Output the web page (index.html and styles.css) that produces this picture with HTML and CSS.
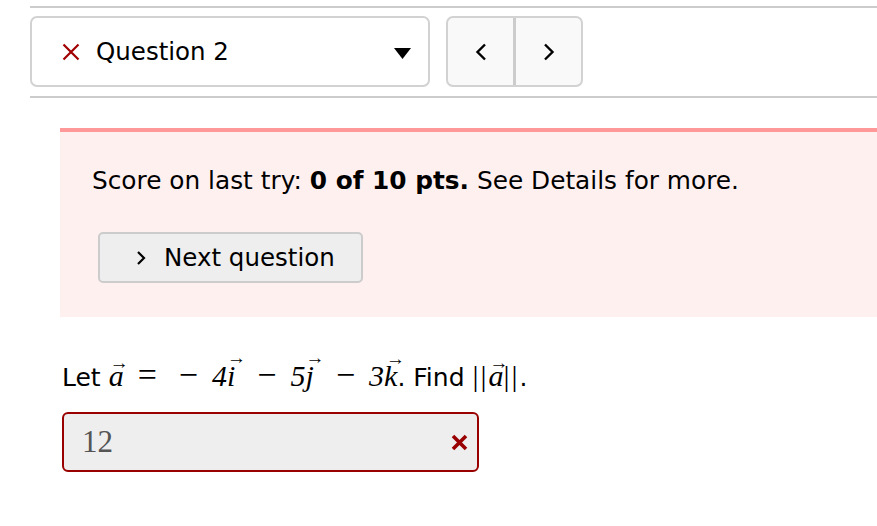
FILE: index.html
```html
<!DOCTYPE html>
<html>
<head>
<meta charset="utf-8">
<link rel="stylesheet" href="styles.css">
</head>
<body>
<div class="page">
  <div class="nav">
    <div class="select">
      <svg class="x" width="18" height="18" viewBox="0 0 18 18"><path d="M1.5 1.5 L16.5 16.5 M16.5 1.5 L1.5 16.5" stroke="#a00000" stroke-width="2.2"/></svg>
      <span class="qlabel">Question 2</span>
      <svg class="caret" width="17" height="11" viewBox="0 0 17 11"><path d="M0 0 H17 L8.5 11 Z" fill="#000"/></svg>
    </div>
    <div class="pager">
      <div class="pbtn"><svg width="12" height="20" viewBox="0 0 12 20"><path d="M10 2.5 L2.5 10 L10 17.5" fill="none" stroke="#000" stroke-width="2.4"/></svg></div>
      <div class="pdiv"></div>
      <div class="pbtn"><svg width="12" height="20" viewBox="0 0 12 20"><path d="M2 2.5 L9.5 10 L2 17.5" fill="none" stroke="#000" stroke-width="2.4"/></svg></div>
    </div>
  </div>

  <div class="score">
    <p class="scoretext">Score on last try: <b>0 of 10 pts.</b> See Details for more.</p>
    <div class="nextbtn"><svg width="10" height="16" viewBox="0 0 10 16"><path d="M2 2 L8 8 L2 14" fill="none" stroke="#000" stroke-width="2.2"/></svg><span>Next question</span></div>
  </div>

  <div class="question">
    <p class="qtext">Let <span class="m"><span class="vec">a</span><span class="rel">=</span><span class="bin first">&minus;</span><span class="n">4</span><span class="vec vi">i</span><span class="bin">&minus;</span><span class="n">5</span><span class="vec vj">j</span><span class="bin">&minus;</span><span class="n">3</span><span class="vec vk">k</span></span>. Find <span class="m"><span class="bar">||</span><span class="vec">a</span><span class="bar">||</span></span>.</p>
    <div class="answer">
      <span class="val">12</span>
      <svg class="wrong" width="17" height="17" viewBox="0 0 17 17"><path d="M2 2 L15 15 M15 2 L2 15" stroke="#990000" stroke-width="3.6"/></svg>
    </div>
  </div>
</div>
</body>
</html>
```

FILE: styles.css
```css
html, body {
  margin: 0;
  padding: 0;
  background: #fff;
}
body {
  font-family: "DejaVu Sans", "Open Sans", sans-serif;
  color: #000;
}
.page {
  width: 877px;
  height: 526px;
  overflow: hidden;
}
.nav {
  margin: 6px 0 0 30px;
  border-top: 2px solid #cccccc;
  border-bottom: 2px solid #cccccc;
  padding: 8px 0 9px 0;
  display: flex;
  gap: 16px;
}
.select {
  width: 366px;
  height: 67px;
  border: 2px solid #d2d2d2;
  border-radius: 7px;
  display: flex;
  align-items: center;
  padding-left: 30px;
}
.x {
  margin-right: 16px;
}
.qlabel {
  font-size: 24.5px;
  flex: 1;
}
.caret {
  margin-right: 17px;
  margin-top: 4px;
}
.pager {
  display: flex;
  border: 2px solid #d2d2d2;
  border-radius: 7px;
  background: #f9f9f9;
  height: 67px;
}
.pbtn {
  width: 65px;
  display: flex;
  align-items: center;
  justify-content: center;
}
.pdiv {
  width: 3px;
  background: #cccccc;
}
.score {
  margin: 30px 0 0 60px;
  border-top: 4px solid #ff9999;
  background: #fff0f0;
  padding: 34px 0 34px 32px;
}
.scoretext {
  margin: 0;
  font-size: 24.8px;
  line-height: 30px;
}
.scoretext b {
  font-weight: 700;
}
.nextbtn {
  margin: 36px 0 0 6px;
  width: 265px;
  height: 51px;
  box-sizing: border-box;
  border: 2px solid #cccccc;
  border-radius: 5px;
  background: #eeeeee;
  display: flex;
  align-items: center;
  padding-left: 36px;
  gap: 18px;
  font-size: 24.5px;
}
.question {
  margin: 44px 0 0 62px;
}
.qtext {
  margin: 0;
  font-size: 25px;
  line-height: 34px;
  height: 34px;
  white-space: nowrap;
}
.m {
  font-family: "Liberation Serif", "DejaVu Serif", serif;
  font-size: 30px;
  line-height: 20px;
}
.vec {
  font-style: italic;
  position: relative;
  display: inline-block;
}
.vec::before {
  content: "\2192";
  font-style: normal;
  position: absolute;
  font-size: 19px;
  top: -13px;
  left: 1px;
}
.vi::before, .vj::before {
  top: -18px;
  left: 0;
}
.vk::before {
  top: -17px;
  left: 2px;
}
.rel, .bin {
  font-size: 34px;
  line-height: 20px;
}
.rel {
  margin: 0 11px 0 14px;
}
.bin {
  margin: 0 14px 0 22px;
}
.bin.first {
  margin-left: 11px;
}
.n {
  font-style: italic;
}
.bar {
  letter-spacing: 2px;
}
.answer {
  margin-top: 17px;
  width: 417px;
  height: 60px;
  box-sizing: border-box;
  border: 2px solid #990000;
  border-radius: 6px;
  background: #eeeeee;
  display: flex;
  align-items: center;
  justify-content: space-between;
  padding: 0 9px 0 18px;
}
.val {
  font-family: "Liberation Serif", "DejaVu Serif", serif;
  font-size: 31px;
  color: #555;
}
```
